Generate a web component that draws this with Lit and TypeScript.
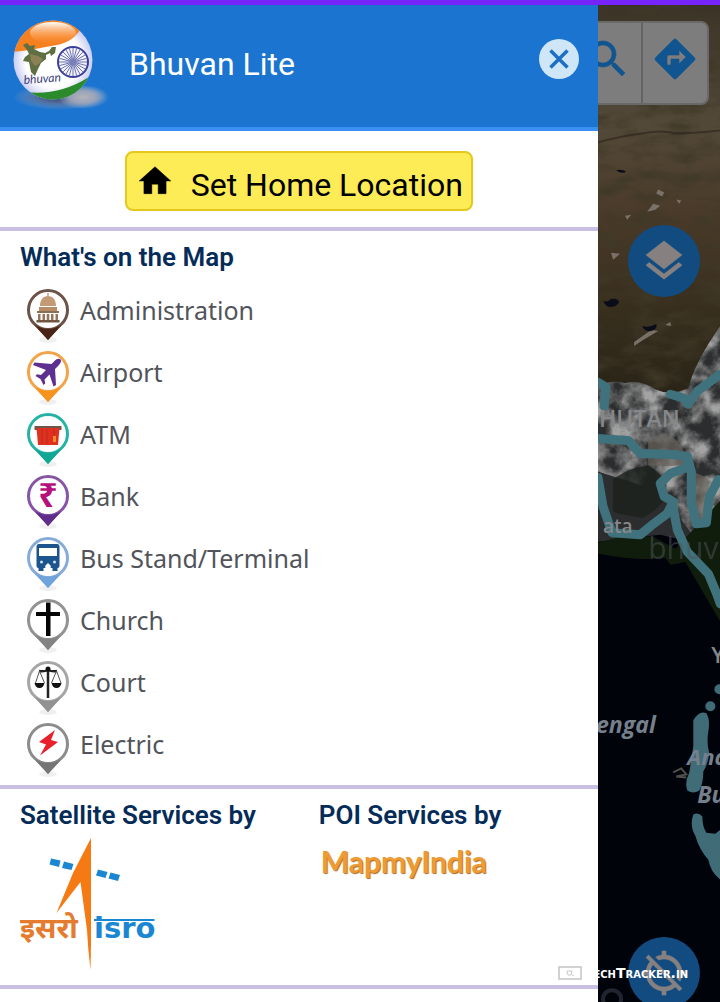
import { LitElement, html, css, svg } from "lit";
import { customElement, property } from "lit/decorators.js";

type Place = { name: string; ring: string; tip: string; glyph: unknown };

const PLACES: Place[] = [
  {
    name: "Administration",
    ring: "#6b5348",
    tip: "#4a2517",
    glyph: svg`<g fill="#c39a74"><path d="M21.300 5h1.400v3h-1.400zM14 18c0-6 3-10 8-10s8 4 8 10z"/><path d="M13 19h18v4H13z" fill="#b58d68"/><path d="M11 23h22v2H11z" fill="#8d6d52"/><path d="M12 26h2.500v6H12zm4.500 0H19v6h-2.500zm4.200 0h2.600v6h-2.600zm4.300 0h2.500v6H25zm4.500 0H32v6h-2.500z" fill="#94745a"/><path d="M10.500 32h23v2.500h-23z" fill="#6f5644"/></g>`,
  },
  {
    name: "Airport",
    ring: "#f2a44a",
    tip: "#f7921e",
    glyph: svg`<path fill="#5d2f91" d="M34.500 9.500c-1.500-1.500-4-.5-6 1.500l-3 3-17-1.500-1.500 2.500 13 5-5 5-4-.7-1.500 1.700 5 3 3 6 1.700-1.500-.7-4 5-5 4 12 2.500-1.500-1-16 3.500-3.500c1.800-1.800 3.300-4.700 2-6z"/>`,
  },
  {
    name: "ATM",
    ring: "#27b3a3",
    tip: "#10a795",
    glyph: svg`<path fill="#6b5750" d="M8.500 14h27v4h-27z"/><path fill="#e0301e" d="M10.500 16h23l-1.500 17H12z"/><path stroke="#b82a1e" d="M16 17v15M21 17v15M28 17v6" fill="none"/><path fill="#f58a2c" d="M27 24h3v6h-3z"/>`,
  },
  {
    name: "Bank",
    ring: "#8656a5",
    tip: "#5f2c8b",
    glyph: svg`<text x="22" y="33" text-anchor="middle" font-family="Noto Sans, Roboto, sans-serif" font-weight="700" font-size="34" fill="#b5107b">₹</text>`,
  },
  {
    name: "Bus Stand/Terminal",
    ring: "#86abd8",
    tip: "#6fa3dc",
    glyph: svg`<path fill="#1c548d" d="M13 8h18q2.500 0 2.500 3v19q0 2-2 2v3h-5v-3h-9v3h-5v-3q-2 0-2-2V11q0-3 2.500-3z"/><path fill="#fff" d="M13 12h18v8H13zM19 30l3-3 3 3-1 4h-4z"/><circle cx="15.500" cy="26" r="1.500" fill="#cfe0f2"/><circle cx="28.500" cy="26" r="1.500" fill="#cfe0f2"/>`,
  },
  {
    name: "Church",
    ring: "#929292",
    tip: "#838383",
    glyph: svg`<path fill="#050505" d="M20 4.500h4.500v9.500H34v4h-9.500v20H20V18H10v-4h10z"/>`,
  },
  {
    name: "Court",
    ring: "#a6a6a6",
    tip: "#929292",
    glyph: svg`<path d="M22 8v30M13 11q5 1 9-1 4 2 9 1" fill="none" stroke="#222" stroke-width="2.500"/><path d="M13.500 11L9.500 23M13.500 11l5 12M30.500 11l-5 12M30.500 11l4.500 12" stroke="#555" fill="none"/><path fill="#111" d="M8.500 23h10q-1 5-5 5t-5-5zM25.500 23h10q-1 5-5 5t-5-5z"/><circle cx="22" cy="9" r="2.500" fill="#111"/>`,
  },
  {
    name: "Electric",
    ring: "#8c8c8c",
    tip: "#757575",
    glyph: svg`<path fill="#e8202c" d="M29 8L13 20l7 2.500-6 11L32 20l-7-2z"/>`,
  },
];

const MI = {
  home: "M10 20v-6h4v6h5v-8h3L12 3 2 12h3v8z",
  search:
    "M15.5 14h-.79l-.28-.27C15.41 12.59 16 11.11 16 9.5 16 5.91 13.09 3 9.5 3S3 5.91 3 9.5 5.91 16 9.5 16c1.61 0 3.09-.59 4.23-1.57l.27.28v.79l5 4.99L20.49 19l-4.99-5zm-6 0C7.01 14 5 11.99 5 9.5S7.01 5 9.5 5 14 7.01 14 9.5 11.99 14 9.5 14z",
  directions:
    "M21.71 11.29l-9-9c-.39-.39-1.02-.39-1.41 0l-9 9c-.39.39-.39 1.02 0 1.41l9 9c.39.39 1.02.39 1.41 0l9-9c.39-.38.39-1.01 0-1.41zM14 14.5V12h-4v3H8v-4c0-.55.45-1 1-1h5V7.5l3.5 3.5-3.5 3.5z",
  layers:
    "M11.99 18.54l-7.37-5.73L3 14.07l9 7 9-7-1.63-1.27-7.38 5.74zM12 16l7.36-5.73L21 9l-9-7-9 7 1.63 1.27L12 16z",
  gpsOff:
    "M20.94 11c-.46-4.17-3.77-7.48-7.94-7.94V1h-2v2.06c-1.13.12-2.19.46-3.16.97l1.5 1.5C10.16 5.19 11.06 5 12 5c3.87 0 7 3.13 7 7 0 .94-.19 1.84-.52 2.65l1.5 1.5c.5-.96.84-2.02.97-3.15H23v-2h-2.06zM3 4.27l2.04 2.04C3.97 7.62 3.25 9.23 3.06 11H1v2h2.06c.46 4.17 3.77 7.48 7.94 7.94V23h2v-2.06c1.77-.2 3.38-.91 4.69-1.98L19.73 21 21 19.73 4.27 3 3 4.27zm13.27 13.27C15.09 18.45 13.61 19 12 19c-3.87 0-7-3.13-7-7 0-1.61.55-3.09 1.46-4.27l9.81 9.81z",
};

const icon = (d: string) =>
  html`<svg class="icon" viewBox="0 0 24 24" aria-hidden="true"><path fill="currentColor" stroke="currentColor" stroke-width="0.300" d=${d}></path></svg>`;

@customElement("place-pin")
class PlacePin extends LitElement {
  @property({ attribute: false }) place!: Place;

  static styles = css`
    :host { display: block; }
    .pin { display: block; width: 44px; height: 56px; overflow: visible; }
  `;

  render() {
    const p = this.place;
    return html`<svg class="pin" viewBox="0 0 44 56" aria-hidden="true">
      <ellipse cx="22" cy="52" rx="9" ry="3" fill="#000" opacity="0.06"></ellipse>
      <path fill=${p.tip} d="M8 37L22 52L36 37Q22 44 8 37z"></path>
      <circle cx="22" cy="22" r="19.500" fill="#fff" stroke=${p.ring} stroke-width="3"></circle>
      <path fill=${p.tip} d="M9 37Q22 45 35 37L22 52z"></path>
      ${p.glyph}
    </svg>`;
  }
}

@customElement("bhuvan-logo")
class BhuvanLogo extends LitElement {
  static styles = css`
    :host { display: block; }
    .logo { display: block; width: 100px; height: 96px; }
  `;

  render() {
    const spokes = Array.from({ length: 24 }, (_, i) => {
      const a = (i * Math.PI) / 12;
      return svg`<line x1="64" y1="46" x2=${64 + 14 * Math.cos(a)} y2=${46 + 14 * Math.sin(a)} stroke="#6d73ae"></line>`;
    });
    return html`<svg class="logo" viewBox="0 0 100 96" role="img" aria-label="Bhuvan">
      <defs>
        <radialGradient id="shade"><stop offset="0" stop-color="#2d3568"/><stop offset="0.500" stop-color="#58709c" stop-opacity="0.900"/><stop offset="1" stop-color="#7f9cc4" stop-opacity="0"/></radialGradient>
        <radialGradient id="glow"><stop offset="0" stop-color="#b5b3bc"/><stop offset="0.500" stop-color="#a2a8b8" stop-opacity="0.900"/><stop offset="1" stop-color="#9fb2cc" stop-opacity="0"/></radialGradient>
        <radialGradient id="ball" cx="0.500" cy="0.500" r="0.500"><stop offset="0.700" stop-color="#fff"/><stop offset="1" stop-color="#c9cdf2"/></radialGradient>
        <linearGradient id="shine" x1="0" y1="0" x2="0" y2="1"><stop offset="0" stop-color="#fff"/><stop offset="1" stop-color="#ff8a2a" stop-opacity="0.100"/></linearGradient>
        <clipPath id="disc"><circle cx="44" cy="44" r="39.500"/></clipPath>
      </defs>
      <ellipse cx="50" cy="81" rx="46" ry="13" fill="url(#shade)"/>
      <ellipse cx="74" cy="81" rx="26" ry="12" fill="url(#glow)"/>
      <circle cx="44" cy="44" r="39.500" fill="url(#ball)"/>
      <g clip-path="url(#disc)">
        <path fill="#f58020" d="M0 0H62L71 14Q62 28 42 30Q24 34 4 36z"/>
        <path fill="#2a8a2c" d="M16 76Q50 80 80 61L80 96H16z"/>
      </g>
      <ellipse cx="44" cy="17" rx="23" ry="11" fill="url(#shine)"/>
      <path fill="#5f6f42" d="M14 29l4-2 3 3 5-1-1 4 6 3 5 1 4-2 3-4 4 0-1 6-4 3-1-3-4 2 0 4-5 4-3 6-3 7-4-4-2-10-6-1 2-4 4-3-2-4z"/>
      <path fill="#8c8154" d="M21 38l8 2 5 3-4 5-4 2-4-5z"/>
      <circle cx="64" cy="46" r="15" fill="#f4f4ff" stroke="#3b3f98" stroke-width="2"/>
      ${spokes}
      <circle cx="64" cy="46" r="3.500" fill="#7a80b8"/>
      <text x="15" y="68" transform="rotate(-4 15 68)" font-family="Lato, sans-serif" font-style="italic" font-size="12" fill="#3a3e78">bhuvan</text>
    </svg>`;
  }
}

@customElement("satellite-map")
class SatelliteMap extends LitElement {
  static styles = css`
    :host { display: block; position: relative; overflow: hidden; background: #01030b; }
    .terrain { position: absolute; top: 0; left: 0; width: 100%; height: 100%; display: block; }
    .place { font-family: "Open Sans", "Noto Sans", sans-serif; font-weight: 600; fill: #85888a; }
    .sea { font-style: italic; fill: #75808c; font-weight: 700; }
    .tools {
      position: absolute; top: 16px; right: 11px; display: flex; box-sizing: border-box;
      height: 84px; background: #7d7d7d; border: 2px solid #696969; border-radius: 8px;
    }
    .tool {
      display: grid; place-items: center; width: 66px; padding: 0 0 8px; border: 0;
      background: none; color: #10558f;
    }
    .tool + .tool { border-left: 2px solid #646464; }
    .round {
      position: absolute; right: 20px; display: grid; place-items: center; width: 72px; height: 72px;
      padding: 0; border: 0; border-radius: 50%; background: #114b80; color: #868180;
    }
    .layers { top: 220px; }
    .locate { bottom: -7px; }
    .icon { width: 48px; height: 48px; display: block; }
  `;

  render() {
    return html`
      <svg class="terrain" viewBox="598 5 122 997" preserveAspectRatio="xMinYMin slice" aria-hidden="true">
        <defs>
          <linearGradient id="land" x1="0" y1="0" x2="0" y2="1">
            <stop offset="0" stop-color="#3a3225"/><stop offset="0.120" stop-color="#473f33"/>
            <stop offset="0.300" stop-color="#534938"/><stop offset="0.520" stop-color="#4a3a29"/>
            <stop offset="0.720" stop-color="#3a301f"/><stop offset="1" stop-color="#272316"/>
          </linearGradient>
          <filter id="relief" x="0" y="0" width="100%" height="100%">
            <feTurbulence type="fractalNoise" baseFrequency="0.030 0.070" numOctaves="5" seed="8"/>
            <feColorMatrix values="0 0 0 0 0.050  0 0 0 0 0.040  0 0 0 0 0.020  2.200 0 0 0 -0.900"/>
          </filter>
          <filter id="cloud" x="0" y="0" width="100%" height="100%">
            <feTurbulence type="fractalNoise" baseFrequency="0.050" numOctaves="5" seed="4" result="n"/>
            <feColorMatrix in="n" values="0 0 0 0 0.370  0 0 0 0 0.370  0 0 0 0 0.370  2.400 0 0 0 -0.800"/>
            <feComposite operator="in" in2="SourceAlpha"/>
          </filter>
        </defs>
        <rect x="598" y="5" width="122" height="400" fill="url(#land)"/>
        <rect x="598" y="5" width="122" height="400" filter="url(#relief)"/>
        <path fill="none" stroke="#241c15" stroke-width="2" opacity="0.500" d="M598 142q20-6 50-10 20-2 25 1 20 0 47-3"/>
        <path fill="#80786f" d="M658 189l6 3-2 4-6-3zM653 203l7 2-5 4-8 2zM611 252l9 1-7 6zM676 199l5 1-2 3zM634 341l17-12 7 1-15 9-9 6zM665 324l5-3 1 4zM625 215l6-1-4 5z" opacity="0.900"/>
        <path fill="#0a0d17" d="M603 300q4 2 8-2 6-1 8 3-2 5-9 5-4 0-7-6zM642 325q7 2 14-2 2 5-5 7-7 1-9-5zM616 170q5-2 10 1-3 3-10-1z"/>
        <path fill="#2c2d2e" d="M598 385Q612 378 625 382 640 378 655 388 670 395 688 387 695 360 720 325V545L690 540L660 533L598 540z"/>
        <path filter="url(#cloud)" d="M598 385Q612 378 625 382 640 378 655 388 670 395 688 387 695 360 720 325V545L690 530L660 490L598 470z"/>
        <path fill="#68625b" opacity="0.700" d="M648 440q8-8 18-7 12 4 17 16l3 14q-20 3-38 1zM690 470q10 2 18 8 2 20-6 48-8-15-12-35z"/>
        <path fill="#1b201c" opacity="0.800" d="M613 478q15-12 35-14 10 6 17 14 3 10-2 22-8 10-20 16-20-2-30-6z"/>
        <path fill="#101d0c" d="M598 541l30-8 25 2 22 12 45-48V620L685 560Q650 570 598 555z"/>
        <path fill="#01030b" d="M598 552Q640 560 665 556L712 620L720 630V1002H598z"/>
        <g fill="none" stroke="#3f727c" stroke-width="9" stroke-linejoin="round" stroke-linecap="round">
          <path d="M598 381L606 386L604 405M598 437L612 438L628 439L640 452L672 453L687 455L687 466L670 472L660 482L664 495L673 500L667 512L651 524L640 533L612 531L603 505L598 476"/>
          <path d="M670 393L684 397L688 403L697 390L720 373M687 455L691 470L691 500L696 522L706 521L709 495L718 478"/>
          <path d="M672 501L677 528L687 550L708 572L716 591L720 602"/>
        </g>
        <g fill="#3f6c76">
          <path d="M693 718q6-10 13-7 4 6 2 18-2 12 1 22-2 12-6 18 0 12-4 19-6 4-12 0-3-8 2-18l4-26z"/>
          <circle cx="710" cy="704" r="5"/><circle cx="719" cy="687" r="5"/>
          <path d="M693 812q5-3 9 2 0 10 4 16l9 1 5-4V877q-10-8-12-20-9-10-13-24-6-10-2-21z"/>
        </g>
        <path fill="none" stroke="#514f4c" stroke-width="2" d="M673 770l8-4 5 6-10 2 10 1"/>
        <g class="place">
          <text x="599" y="426" font-size="23">HUTAN</text>
          <text x="603" y="531" font-size="19">ata</text>
          <text x="711" y="661" font-size="22">Y</text>
          <text class="sea" x="596" y="731" font-size="23">engal</text>
          <text class="sea" x="687" y="763" font-size="22">And</text>
          <text class="sea" x="697" y="800" font-size="23">Bu</text>
        </g>
        <text x="648" y="557" font-size="30" font-family="Open Sans, sans-serif" fill="#4f5357" opacity="0.500">bhuv</text>
        <circle cx="612" cy="996" r="9" fill="none" stroke="#20252f" stroke-width="4"/>
      </svg>
      <div class="tools">
        <button class="tool" aria-label="Search">${icon(MI.search)}</button>
        <button class="tool" aria-label="Directions">${icon(MI.directions)}</button>
      </div>
      <button class="round layers" aria-label="Layers">${icon(MI.layers)}</button>
      <button class="round locate" aria-label="Locate me">${icon(MI.gpsOff)}</button>
    `;
  }
}

@customElement("app-root")
class AppRoot extends LitElement {
  static styles = css`
    :host {
      display: grid; grid-template-columns: 83fr 17fr; grid-template-rows: auto 1fr;
      position: relative; height: 100vh; overflow: hidden; font-family: Roboto, sans-serif; color: #000;
    }
    .status { grid-column: 1 / -1; height: 5px; background: #7524fb; }
    .drawer { display: flex; flex-direction: column; min-height: 0; min-width: 0; background: #fff; }
    .header {
      display: flex; align-items: center; gap: 20px; height: 122px; flex: none; padding: 0 18px 0 9px;
      background: #1b74d0; border-bottom: 4px solid #3b90f3; color: #fff;
    }
    .title, bhuvan-logo { padding-bottom: 5px; }
    .title { flex: 1; margin: 0; font-size: 32px; line-height: 40px; font-weight: 400; }
    .close {
      width: 42px; height: 42px; margin-bottom: 14px; padding: 0; border: 0; background: none;
    }
    .cross { display: block; width: 42px; height: 42px; }
    .home-row { display: flex; justify-content: center; flex: none; padding: 20px 0 16px; }
    .home {
      display: flex; align-items: center; gap: 17px; box-sizing: border-box; height: 60px; padding: 0 8px 0 9px;
      border: 2px solid #e6c71c; border-radius: 8px; background: #fdec55; color: #000;
      font: 400 32px/40px Roboto, sans-serif;
    }
    .home .label { padding-top: 8px; }
    .icon { display: block; width: 38px; height: 38px; }
    .map-key { flex: 1; min-height: 0; overflow: hidden; border-top: 4px solid #c9bfe3; padding: 10px 20px 0; }
    .heading { margin: 0; font-size: 26px; line-height: 32px; font-weight: 600; color: #052c58; }
    .places { list-style: none; margin: 0; padding: 15px 0 0 6px; }
    .place { display: flex; gap: 10px; height: 62px; }
    .name {
      padding-top: 6px; font-family: "Noto Sans", sans-serif; font-size: 25px; line-height: 32px; color: #51545a;
    }
    .credits {
      display: grid; grid-template-columns: 1fr 1fr; flex: none; height: 186px; padding-top: 10px;
      border-top: 4px solid #c9bfe3; border-bottom: 4px solid #c9bfe3; margin-bottom: 13px;
    }
    .credit { padding-left: 20px; }
    .isro { display: block; width: 140px; height: 140px; margin-top: 4px; }
    .mmi {
      display: inline-block; margin-top: 10px; padding-left: 2px; font-family: Lato, sans-serif; font-weight: 700;
      font-size: 30px; line-height: 40px; color: #ee9a35; text-decoration: none; text-shadow: 1px 1px 1px #a86a28;
    }
    .watermark {
      position: absolute; right: 32px; bottom: 20px; display: flex; align-items: center; gap: 2px;
      font: 700 14px/18px "DejaVu Sans", sans-serif; color: #fff; pointer-events: none;
    }
    .badge { width: 24px; height: 14px; }
    .caps { font-variant: small-caps; }
  `;

  render() {
    return html`
      <div class="status"></div>
      <aside class="drawer">
        <header class="header">
          <bhuvan-logo></bhuvan-logo>
          <h1 class="title">Bhuvan Lite</h1>
          <button class="close" aria-label="Close menu">
            <svg class="cross" viewBox="0 0 42 42" aria-hidden="true">
              <circle cx="21" cy="21" r="20" fill="#cfe5f8"></circle>
              <path d="M12.500 12.500l17 17M29.500 12.500l-17 17" stroke="#1b6fc4" stroke-width="3.500"></path>
            </svg>
          </button>
        </header>
        <div class="home-row">
          <button class="home">${icon(MI.home)}<span class="label">Set Home Location</span></button>
        </div>
        <section class="map-key">
          <h2 class="heading">What's on the Map</h2>
          <ul class="places">
            ${PLACES.map(
              (p) => html`<li class="place"><place-pin .place=${p}></place-pin><span class="name">${p.name}</span></li>`,
            )}
          </ul>
        </section>
        <footer class="credits">
          <div class="credit">
            <h2 class="heading">Satellite Services by</h2>
            <svg class="isro" viewBox="20 835 140 140" role="img" aria-label="ISRO">
              <path fill="#f57a14" d="M91 838V945L90.500 970Q88 950 87 930L80.500 882L56.500 913L73 873z"/>
              <path fill="#1b87d2" d="M51 858.500l9.500 2-1.500 6.500-9.500-2.500zM64 861.500l9.500 2.500-2 6-9.500-2zM98 869.500l9.500 2.500-2 6-9.500-2.500zM110.500 872.500l9.500 2.500-2 6-9.500-2.500z"/>
              <path stroke="#1b87d2" stroke-width="2" d="M94 920h60.500"/>
              <text x="20" y="938" font-family="Noto Sans Devanagari, Lohit Devanagari, FreeSans, sans-serif" font-weight="700" font-size="29" fill="#e57b2e">इसरो</text>
              <text x="94" y="938" font-family="DejaVu Sans, sans-serif" font-weight="700" font-size="29" fill="#1b87d2">isro</text>
            </svg>
          </div>
          <div class="credit">
            <h2 class="heading">POI Services by</h2>
            <a class="mmi" href="#mapmyindia">MapmyIndia</a>
          </div>
        </footer>
      </aside>
      <satellite-map></satellite-map>
      <div class="watermark">
        <svg class="badge" viewBox="0 0 24 14" aria-hidden="true">
          <rect x="1" y="1" width="22" height="12" fill="#fff" stroke="#c4c4c4" stroke-width="1.500"/>
          <path d="M9 5h5l-1 4h-3zM14 9l2 1" fill="none" stroke="#c8c8c8"/>
        </svg>
        <span class="caps">TechTracker.in</span>
      </div>
    `;
  }
}
